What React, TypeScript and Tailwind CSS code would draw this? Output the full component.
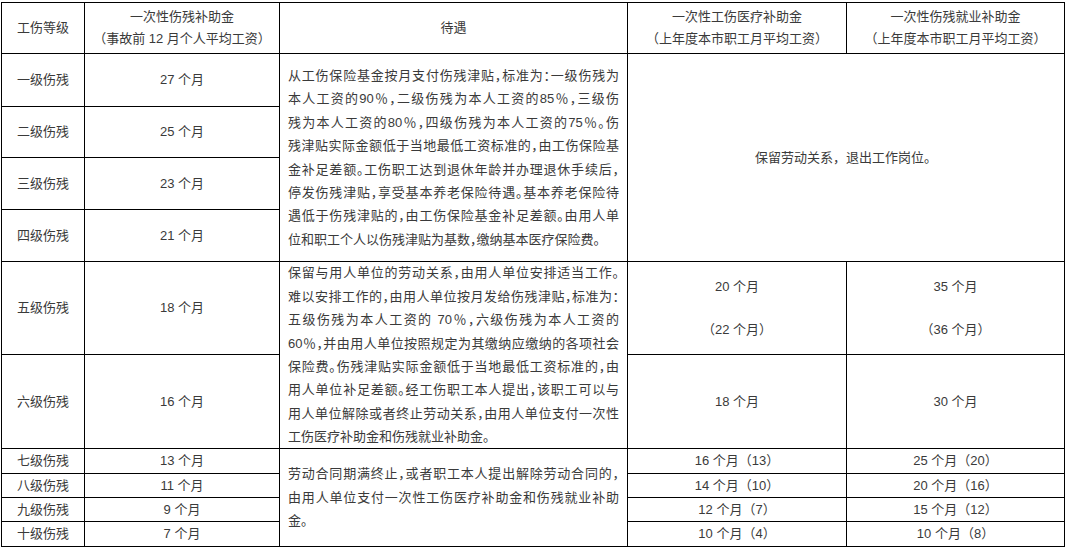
import { Fragment } from "react";

const cell = "bg-white flex items-center justify-center text-center";

const block1 = [
  "从工伤保险基金按月支付伤残津贴，标准为：一级伤残为",
  "本人工资的90％，二级伤残为本人工资的85％，三级伤",
  "残为本人工资的80％，四级伤残为本人工资的75％。伤",
  "残津贴实际金额低于当地最低工资标准的，由工伤保险基",
  "金补足差额。工伤职工达到退休年龄并办理退休手续后，",
  "停发伤残津贴，享受基本养老保险待遇。基本养老保险待",
  "遇低于伤残津贴的，由工伤保险基金补足差额。由用人单",
  "位和职工个人以伤残津贴为基数，缴纳基本医疗保险费。",
];

const block2 = [
  "保留与用人单位的劳动关系，由用人单位安排适当工作。",
  "难以安排工作的，由用人单位按月发给伤残津贴，标准为：",
  "五级伤残为本人工资的 70％，六级伤残为本人工资的",
  "60％，并由用人单位按照规定为其缴纳应缴纳的各项社会",
  "保险费。伤残津贴实际金额低于当地最低工资标准的，由",
  "用人单位补足差额。经工伤职工本人提出，该职工可以与",
  "用人单位解除或者终止劳动关系，由用人单位支付一次性",
  "工伤医疗补助金和伤残就业补助金。",
];

const block3 = [
  "劳动合同期满终止，或者职工本人提出解除劳动合同的，",
  "由用人单位支付一次性工伤医疗补助金和伤残就业补助",
  "金。",
];

const lowRows = [
  { grade: "七级伤残", months: "13 个月", medical: "16 个月（13）", job: "25 个月（20）" },
  { grade: "八级伤残", months: "11 个月", medical: "14 个月（10）", job: "20 个月（16）" },
  { grade: "九级伤残", months: "9 个月", medical: "12 个月（7）", job: "15 个月（12）" },
  { grade: "十级伤残", months: "7 个月", medical: "10 个月（4）", job: "10 个月（8）" },
];

// each line is justified on its own so the breaks match the printed table
function Para({ lines }: { lines: string[] }) {
  return (
    <div className="w-full px-2 text-left leading-[23.4px] [font-feature-settings:'halt']">
      {lines.map((l, i) => (
        <div key={i} className={i < lines.length - 1 ? "text-justify [text-align-last:justify]" : ""}>
          {l}
        </div>
      ))}
    </div>
  );
}

export default function App() {
  return (
    <div className="min-h-screen bg-white pt-[2px] pl-px font-['Liberation_Sans','Noto_Sans_CJK_SC',sans-serif] text-[13px] text-[#3a3a3a]">
      <div className="grid w-fit grid-cols-[82px_194px_347px_218px_217px] grid-rows-[50px_52px_50px_51px_51px_92px_93px_24px_23px_23px_24px] gap-px bg-black p-px">
        {/* header */}
        <div className={cell}>工伤等级</div>
        <div className={`${cell} flex-col leading-[22px]`}>
          <span>一次性伤残补助金</span>
          <span>（事故前 12 月个人平均工资）</span>
        </div>
        <div className={cell}>待遇</div>
        <div className={`${cell} flex-col leading-[22px]`}>
          <span>一次性工伤医疗补助金</span>
          <span>（上年度本市职工月平均工资）</span>
        </div>
        <div className={`${cell} flex-col leading-[22px]`}>
          <span>一次性伤残就业补助金</span>
          <span>（上年度本市职工月平均工资）</span>
        </div>

        {/* 一至四级 */}
        <div className={cell}>一级伤残</div>
        <div className={cell}>27 个月</div>
        <div className={`${cell} row-span-4`}>
          <Para lines={block1} />
        </div>
        <div className={`${cell} col-span-2 row-span-4`}>保留劳动关系，退出工作岗位。</div>
        <div className={cell}>二级伤残</div>
        <div className={cell}>25 个月</div>
        <div className={cell}>三级伤残</div>
        <div className={cell}>23 个月</div>
        <div className={cell}>四级伤残</div>
        <div className={cell}>21 个月</div>

        {/* 五、六级 */}
        <div className={cell}>五级伤残</div>
        <div className={cell}>18 个月</div>
        <div className={`${cell} row-span-2`}>
          <Para lines={block2} />
        </div>
        <div className={`${cell} flex-col gap-[24px]`}>
          <span>20 个月</span>
          <span>（22 个月）</span>
        </div>
        <div className={`${cell} flex-col gap-[24px]`}>
          <span>35 个月</span>
          <span>（36 个月）</span>
        </div>
        <div className={cell}>六级伤残</div>
        <div className={cell}>16 个月</div>
        <div className={cell}>18 个月</div>
        <div className={cell}>30 个月</div>

        {/* 七至十级 */}
        {lowRows.map((r, i) => (
          <Fragment key={r.grade}>
            <div className={cell}>{r.grade}</div>
            <div className={cell}>{r.months}</div>
            {i === 0 && (
              <div className={`${cell} row-span-4`}>
                <Para lines={block3} />
              </div>
            )}
            <div className={cell}>{r.medical}</div>
            <div className={cell}>{r.job}</div>
          </Fragment>
        ))}
      </div>
    </div>
  );
}
